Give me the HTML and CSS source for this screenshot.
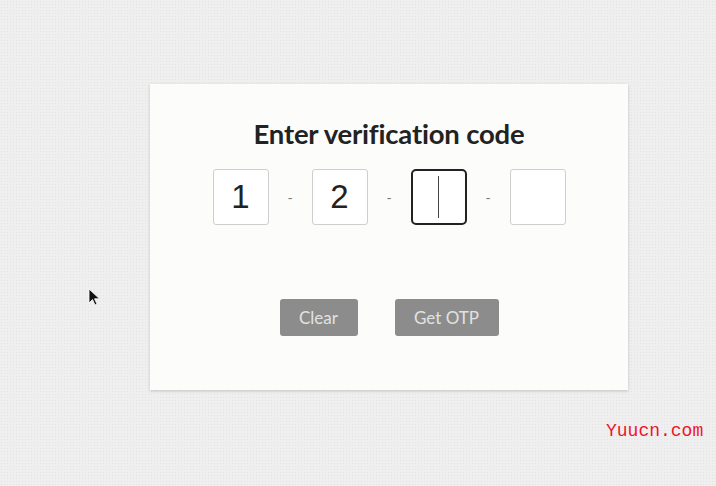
FILE: index.html
```html
<!DOCTYPE html>
<html lang="en">
   <head>
        <meta name="viewport" content="initial-scale=1, width=device-width">
	  <title>Enter verification code</title>
		<link rel="stylesheet" href="styles.css">
   </head>
   <body>
		<div class="page">
			<div class="card">
				<h1 class="title">Enter verification code</h1>
				<div class="otp">
					<div class="digit">1</div>
					<span class="sep">-</span>
					<div class="digit">2</div>
					<span class="sep">-</span>
					<div class="digit focus"><span class="caret"></span></div>
					<span class="sep">-</span>
					<div class="digit"></div>
				</div>
				<div class="actions">
					<button class="btn clear">Clear</button>
					<button class="btn">Get OTP</button>
				</div>
			</div>
		</div>

		<svg class="pointer" width="14" height="20" viewBox="0 0 14 20">
			<path d="M1 1 L1 15 L4.5 11.5 L7 17 L9 16 L6.5 10.8 L11.5 10.8 Z" fill="#111" stroke="#fff" stroke-width="0.8"/>
		</svg>
		<div class="mark">Yuucn.com</div>
   </body>
</html>
```

FILE: styles.css
```css
* {
	box-sizing: border-box;
}

html, body {
	margin: 0;
	padding: 0;
	width: 100%;
	height: 100vh;
	overflow: hidden;
	background-color: #efefef;
	background-image: radial-gradient(#e4e4e4 0.6px, transparent 0.8px);
	background-size: 3px 3px;
	font-family: Lato, 'Liberation Sans', sans-serif;
}

.page {
	padding: 84px 0 0 150px;
}

.card {
	width: 478px;
	height: 306px;
	background: #fcfcfb;
	box-shadow: 0 1px 3px rgba(0,0,0,0.18);
	display: flex;
	flex-direction: column;
	align-items: center;
	padding-top: 34px;
}

.title {
	margin: 0;
	font-size: 27.5px;
	font-weight: 700;
	line-height: 32px;
	color: #222;
	letter-spacing: -0.2px;
}

.otp {
	margin-top: 19px;
	display: flex;
	align-items: center;
}

.digit {
	width: 56px;
	height: 56px;
	border: 1px solid #cfcfcf;
	border-radius: 3px;
	background: #fff;
	display: flex;
	justify-content: center;
	align-items: center;
	font-family: 'Liberation Sans', sans-serif;
	font-size: 33px;
	color: #222;
}

.digit.focus {
	border: 2px solid #222;
	border-radius: 5px;
}

.caret {
	width: 1px;
	height: 42px;
	background: #444;
}

.sep {
	width: 43px;
	text-align: center;
	font-size: 14px;
	color: #777;
}

.actions {
	margin-top: 74px;
	display: flex;
	gap: 37px;
}

.btn {
	height: 37px;
	padding: 0 18px;
	border: 0;
	border-radius: 3px;
	background: #8c8c8c;
	color: #e2e2e2;
	font-family: Lato, 'Liberation Sans', sans-serif;
	font-size: 17px;
}

.btn.clear {
	width: 78px;
}

.btn:not(.clear) {
	width: 104px;
}

.pointer {
	position: absolute;
	left: 88px;
	top: 288px;
}

.mark {
	position: absolute;
	left: 606px;
	top: 421px;
	font-family: 'Liberation Mono', monospace;
	font-size: 18px;
	color: #f0142a;
}
```
